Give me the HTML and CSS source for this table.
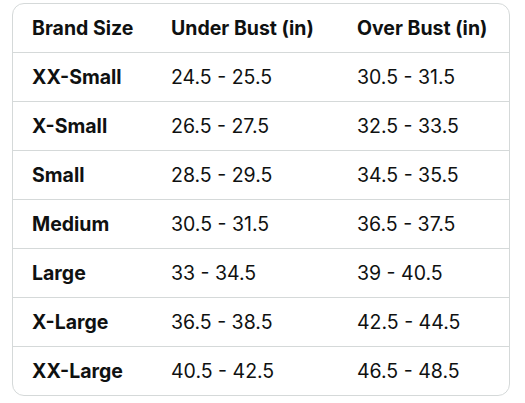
FILE: index.html
```html
<!DOCTYPE html>
<html lang="en">
<head>
    <meta charset="UTF-8">
    <meta name="viewport" content="width=device-width, initial-scale=1.0">
    <title>Size Chart</title>
    <link rel="stylesheet" href="styles.css">
</head>
<body>
    <!-- Size Chart -->
    <div class="size-chart">
        <table>
            <colgroup>
                <col class="col-brand">
                <col class="col-under">
                <col class="col-over">
            </colgroup>
            <thead>
                <tr>
                    <th>Brand Size</th>
                    <th>Under Bust (in)</th>
                    <th>Over Bust (in)</th>
                </tr>
            </thead>
            <tbody>
                <tr><th>XX-Small</th><td>24.5 - 25.5</td><td>30.5 - 31.5</td></tr>
                <tr><th>X-Small</th><td>26.5 - 27.5</td><td>32.5 - 33.5</td></tr>
                <tr><th>Small</th><td>28.5 - 29.5</td><td>34.5 - 35.5</td></tr>
                <tr><th>Medium</th><td>30.5 - 31.5</td><td>36.5 - 37.5</td></tr>
                <tr><th>Large</th><td>33 - 34.5</td><td>39 - 40.5</td></tr>
                <tr><th>X-Large</th><td>36.5 - 38.5</td><td>42.5 - 44.5</td></tr>
                <tr><th>XX-Large</th><td>40.5 - 42.5</td><td>46.5 - 48.5</td></tr>
            </tbody>
        </table>
    </div>
</body>
</html>
```

FILE: styles.css
```css
body {
    margin: 0;
    padding: 3px 15px 0 12px;
    background: #fff;
    font-family: Inter, "Open Sans", Arial, sans-serif;
    color: #0f1111;
}
.size-chart {
    width: 498px;
    border: 1px solid #d5d9d9;
    border-radius: 12px;
    overflow: hidden;
    box-sizing: border-box;
}
table {
    width: 100%;
    border-collapse: collapse;
    table-layout: fixed;
}
.col-brand {
    width: 139px;
}
.col-under {
    width: 186px;
}
th, td {
    height: 48px;
    padding: 0 0 0 19px;
    text-align: left;
    font-size: 19.5px;
    line-height: 24px;
    border-bottom: 1px solid #d5d9d9;
}
th {
    font-weight: 700;
}
td {
    font-weight: 400;
}
tbody tr:last-child th,
tbody tr:last-child td {
    border-bottom: none;
}
```
